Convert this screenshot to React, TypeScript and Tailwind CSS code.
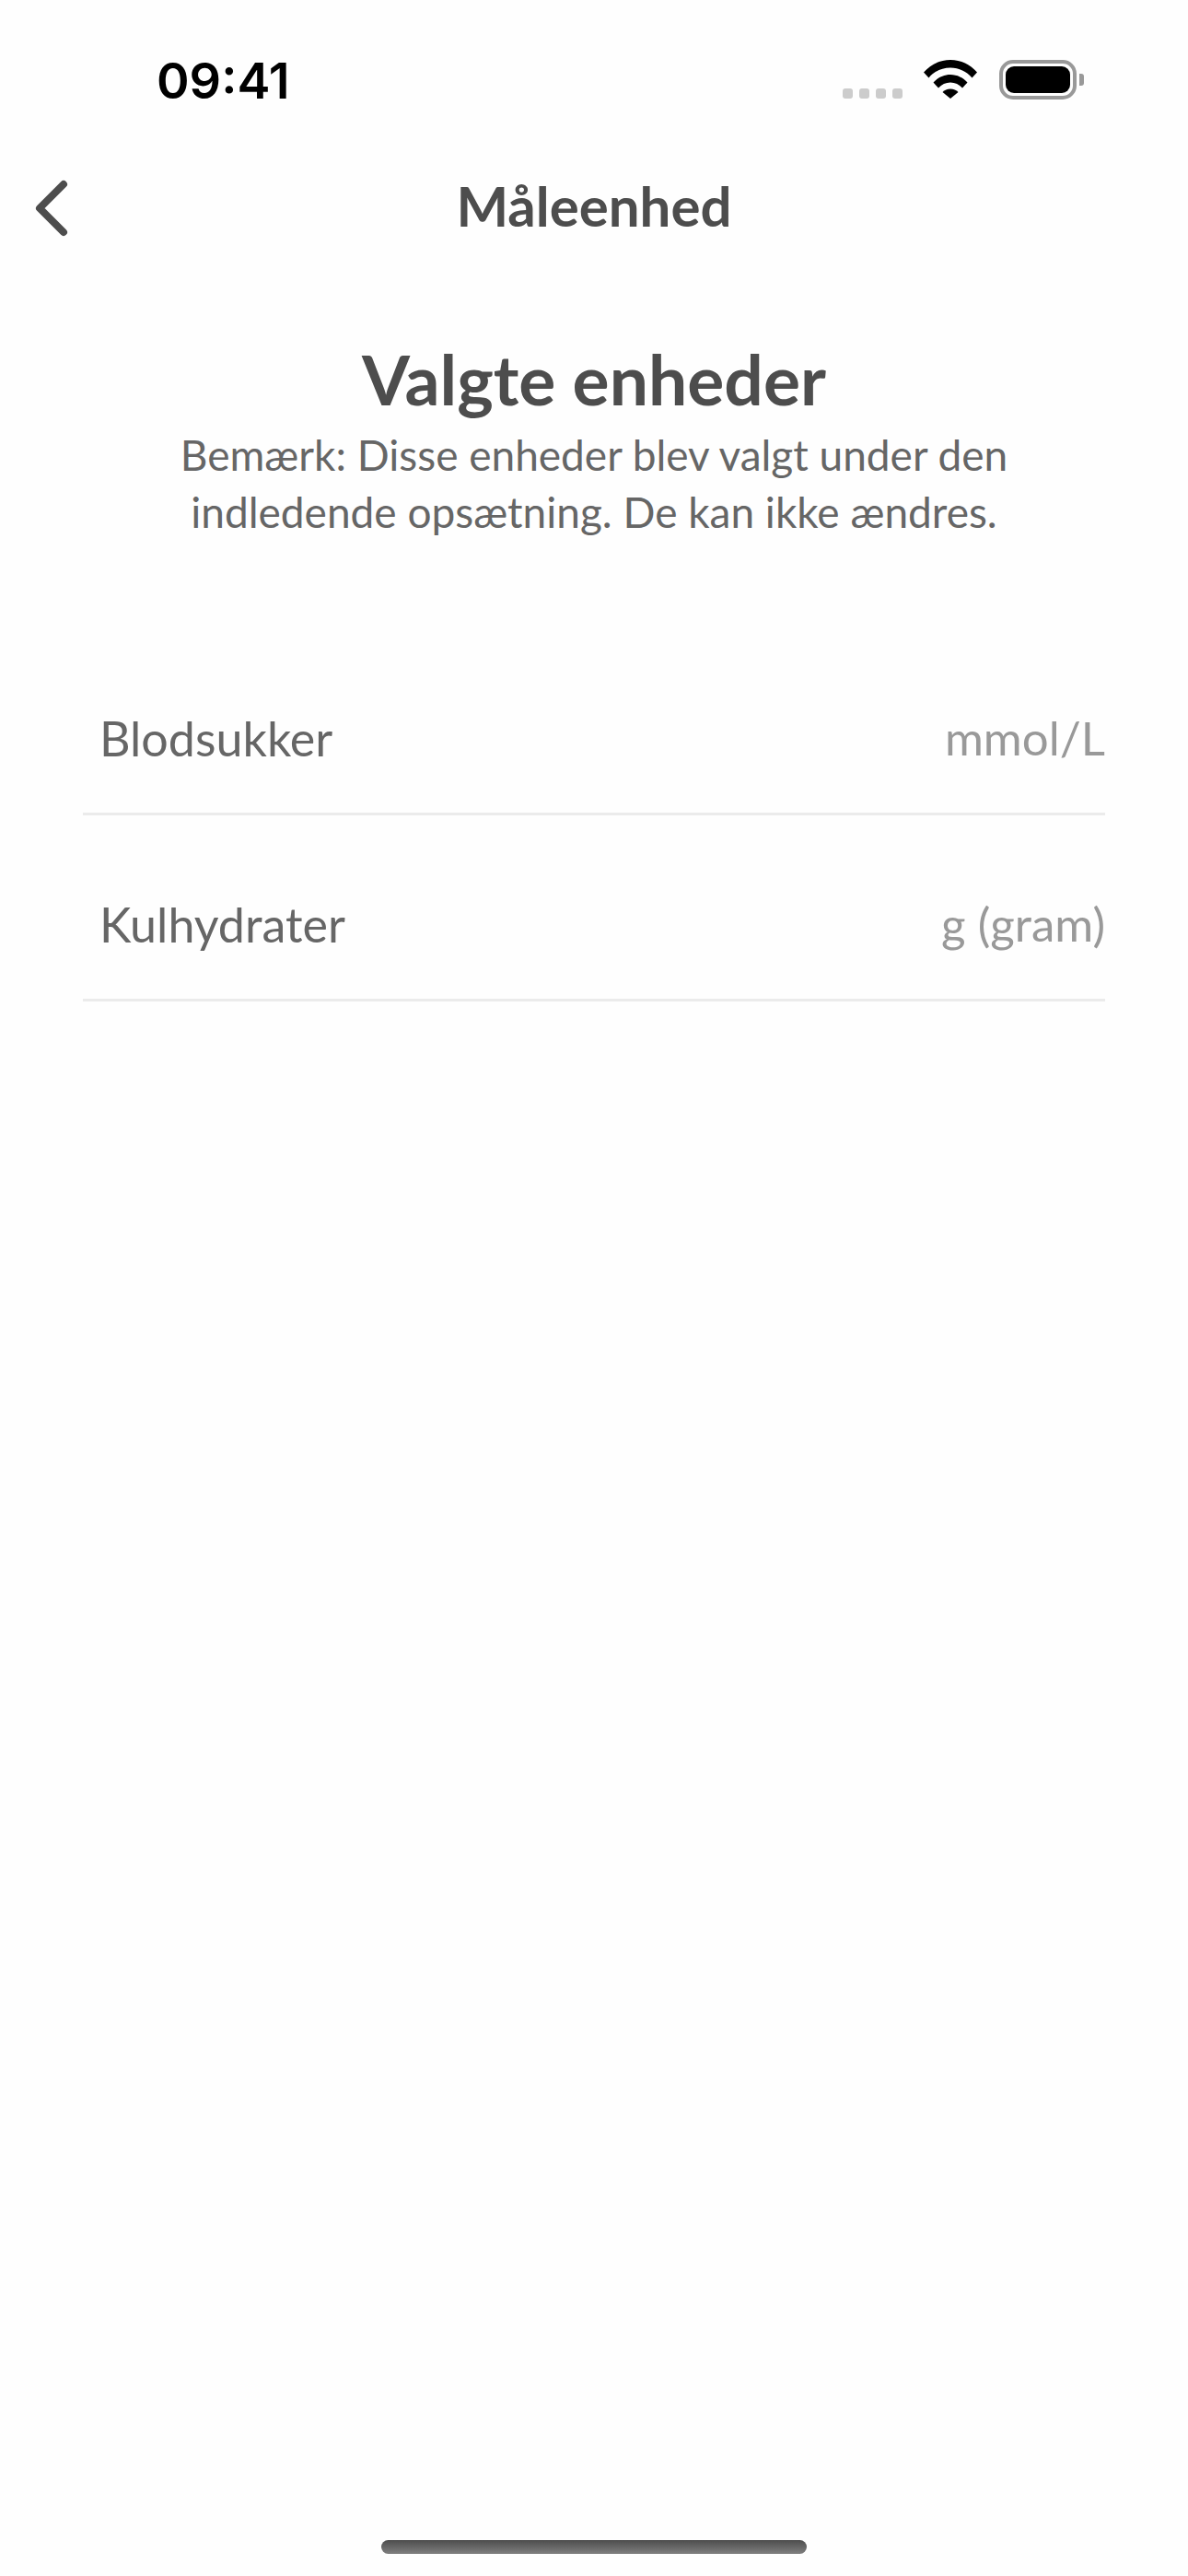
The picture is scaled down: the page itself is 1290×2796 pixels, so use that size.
const font = "font-['Lato','Noto_Sans',sans-serif]"

function WifiIcon() {
    return (
        <svg width="58" height="42" viewBox="0 0 58 42" fill="#000">
            <path d="M0 13.5C7.5 5 17.5 0 29 0s21.500 5 29 13.500l-5.500 6C46.500 12.500 38.500 8.500 29 8.500S11.500 12.500 5.500 19.500z" />
            <path d="M10.500 24.500C15 19.500 21.500 16 29 16s14 3.500 18.500 8.500l-5.500 6C38.500 26.500 34 24.500 29 24.500s-9.500 2-13 6z" />
            <path d="M20.500 35C22.500 32.800 25.500 31.500 29 31.500s6.500 1.300 8.500 3.500L29 42z" />
        </svg>
    )
}

function Row({ label, value }: { label: string; value: string }) {
    return (
        <div className="flex h-[202px] items-center justify-between border-b-[3px] border-[#ebebeb] pl-[18px] pt-[36px]">
            <span className="text-[52px] leading-none text-[#666666]">{label}</span>
            <span className="text-[51px] leading-none text-[#999999]">{value}</span>
        </div>
    )
}

export default function App() {
    return (
        <div className={`${font} flex h-[2796px] w-[1290px] flex-col bg-[#fefefe]`}>
            {/* status bar */}
            <div className="flex h-[172px] items-start justify-between pl-[170px] pr-[113px] pt-[58px]">
                <span className="font-['Inter',sans-serif] text-[54px] font-semibold leading-[60px] text-black">09:41</span>
                <div className="flex items-start pt-[7px]">
                    <div className="mt-[31px] mr-[23px] flex gap-[7px]">
                        <div className="h-[11px] w-[11px] rounded-[3px] bg-[#cccccc]" />
                        <div className="h-[11px] w-[11px] rounded-[3px] bg-[#cccccc]" />
                        <div className="h-[11px] w-[11px] rounded-[3px] bg-[#cccccc]" />
                        <div className="h-[11px] w-[11px] rounded-[3px] bg-[#cccccc]" />
                    </div>
                    <WifiIcon />
                    <div className="ml-[24px] flex items-center">
                        <div className="h-[43px] w-[84px] rounded-[15px] border-[4px] border-[#999999] p-[3px]">
                            <div className="h-full w-full rounded-[9px] bg-black" />
                        </div>
                        <div className="ml-[3px] h-[13px] w-[5px] rounded-r-[3px] bg-[#999999]" />
                    </div>
                </div>
            </div>

            {/* header */}
            <div className="relative flex h-[108px] items-center justify-center pb-[6px]">
                <svg className="absolute left-[36px] top-[22px]" width="42" height="64" viewBox="0 0 42 64" fill="none">
                    <path d="M33 6L7 32l26 26" stroke="#4d4d4d" strokeWidth="8" strokeLinecap="round" strokeLinejoin="round" />
                </svg>
                <span className="text-[60px] font-bold leading-none text-[#4d4d4d]">Måleenhed</span>
            </div>

            {/* intro */}
            <div className="flex flex-col items-center pt-[87px]">
                <h1 className="text-[75px] font-bold leading-[88px] text-[#4d4d4d]">Valgte enheder</h1>
                <p className="mt-[8px] text-center text-[46px] leading-[62px] text-[#666666]">
                    Bemærk: Disse enheder blev valgt under den
                    <br />
                    indledende opsætning. De kan ikke ændres.
                </p>
            </div>

            {/* units */}
            <div className="mx-[90px] mt-[96px] flex flex-col">
                <Row label="Blodsukker" value="mmol/L" />
                <Row label="Kulhydrater" value="g (gram)" />
            </div>

            {/* home indicator */}
            <div className="mt-auto flex justify-center pb-[24px]">
                <div className="h-[15px] w-[462px] rounded-full bg-gradient-to-b from-[#4d4d4d] to-[#808080]" />
            </div>
        </div>
    )
}
